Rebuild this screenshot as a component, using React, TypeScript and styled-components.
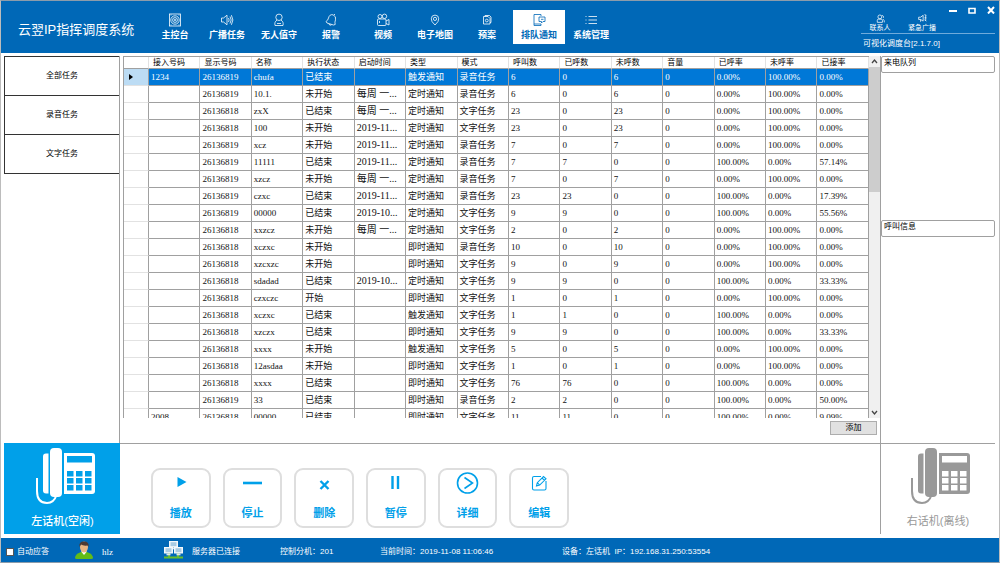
import React from 'react';
import styled, { createGlobalStyle, css } from 'styled-components';

const blue = '#0068b7';
const sky = '#00a0e9';
const line = '#a0a0a0';
const cjk = '"Noto Sans CJK SC", sans-serif';

const GlobalStyle = createGlobalStyle`
  *, *::before, *::after { box-sizing: border-box; }
  body { margin: 0; background: #fff; color: #000; font: 8px/12px "Liberation Sans", ${cjk}; }
  button, input { font: inherit; color: inherit; padding: 0; margin: 0; border: 0; background: none; }
  h1, h2, p { margin: 0; font-weight: 400; }
`;

const Window = styled.div`
  display: flex;
  flex-direction: column;
  height: 100vh;
  min-width: 800px;
  border: 1px solid #8c9cab;
  border-left-color: #bcbcbc;
  border-right-color: #bcbcbc;
`;

/* ---------- header ---------- */
const Header = styled.header`
  display: flex;
  align-items: stretch;
  flex: none;
  height: 52px;
  padding: 0 4px 0 17px;
  background: ${blue};
  color: #fff;
`;

const Title = styled.h1`
  width: 131px;
  padding-top: 19px;
  font-size: 13px;
  line-height: 20px;
  white-space: nowrap;
`;

const Nav = styled.nav`
  display: flex;
  flex: 1;
  padding: 9px 0;
`;

const NavButton = styled.button<{ $active?: boolean }>`
  display: flex;
  flex-direction: column;
  align-items: center;
  gap: 2px;
  width: 52px;
  padding-top: 3px;
  font-size: 9px;
  font-weight: 700;
  line-height: 12px;
  white-space: nowrap;
  ${p => p.$active && css`background: #fff; color: ${blue};`}
`;

const Tools = styled.div`
  display: flex;
  flex-direction: column;
  width: 134px;
`;

const ToolRow = styled.div`
  display: flex;
  justify-content: space-between;
  height: 35px;
  border-bottom: 1px solid #6fabdb;
`;

const QuickLinks = styled.div`
  display: flex;
  gap: 8px;
  padding: 13px 0 0 2px;
`;

const QuickButton = styled.button`
  display: flex;
  flex-direction: column;
  align-items: center;
  width: 34px;
  font-size: 7px;
  line-height: 10px;
  white-space: nowrap;
`;

const WindowControls = styled.div`
  display: flex;
  gap: 11px;
  align-items: flex-start;
  padding-top: 5px;
  button { display: flex; width: 8px; height: 8px; }
`;

const Version = styled.p`
  padding: 4px 2px;
  white-space: nowrap;
`;

/* ---------- body ---------- */
const Body = styled.main`
  display: grid;
  grid-template-columns: 116px minmax(0, 1fr) 115px;
  grid-template-rows: minmax(0, 1fr) 91px;
  flex: 1;
  min-height: 0;
  padding: 3px 4px 4px 3px;
`;

const TaskList = styled.div`
  border-right: 1px solid ${line};
`;

const TaskButton = styled.button`
  display: block;
  width: 100%;
  height: 39px;
  border: solid #333;
  border-width: 1px 0 0 1px;
  &:last-child { height: 40px; border-bottom-width: 1px; }
`;

const Center = styled.section`
  display: flex;
  flex-direction: column;
  min-width: 0;
  min-height: 0;
  padding-left: 3px;
`;

const GridArea = styled.div`
  display: flex;
  flex: 1;
  min-height: 0;
`;

const TableView = styled.div`
  flex: 1;
  min-width: 0;
  overflow: hidden;
`;

const Table = styled.table`
  width: 100%;
  table-layout: fixed;
  border-collapse: separate;
  border-spacing: 0;
  border: solid ${line};
  border-width: 1px 0 0 1px;
`;

const HeadCell = styled.th`
  height: 12px;
  padding: 0 0 0 4px;
  border-bottom: 1px solid ${line};
  border-right: 1px solid #e2e2e2;
  font-weight: 400;
  line-height: 11px;
  text-align: left;
  white-space: nowrap;
`;

const RowHead = styled.th<{ $selected?: boolean }>`
  height: 17px;
  padding: 0 0 0 5px;
  border-right: 1px solid ${line};
  border-bottom: 1px solid #e2e2e2;
  text-align: left;
  ${p => p.$selected && css`background: #bcdcf4;`}
  svg { display: block; }
`;

const Cell = styled.td<{ $large?: boolean; $selected?: boolean }>`
  height: 17px;
  padding: 0 0 0 2px;
  border: solid ${line};
  border-width: 0 1px 1px 0;
  overflow: hidden;
  white-space: nowrap;
  color: #111;
  font-family: "Liberation Serif", ${cjk};
  font-size: ${p => (p.$large ? 10 : 9)}px;
  line-height: 16px;
  ${p => p.$selected && css`background: #0078d7; color: #fff;`}
`;

const Scrollbar = styled.div`
  display: flex;
  flex-direction: column;
  width: 11px;
  background: #f0f0f0;
  svg { flex: none; display: block; }
`;

const Thumb = styled.div`
  height: 125px;
  margin-bottom: auto;
  background: #cdcdcd;
`;

const AddBar = styled.div`
  display: flex;
  justify-content: flex-end;
  height: 25px;
  padding: 3px 3px 8px;
`;

const AddButton = styled.button`
  width: 47px;
  border: 1px solid #adadad;
  background: #e1e1e1;
`;

const Side = styled.aside`
  display: flex;
  flex-direction: column;
  gap: 147px;
  border-left: 1px solid ${line};
`;

const Caption = styled.h2`
  height: 17px;
  padding: 0 2px;
  border: 1px solid ${line};
  border-radius: 2px;
  font-size: 8px;
`;

const PhoneButton = styled.button<{ $idle?: boolean }>`
  display: flex;
  flex-direction: column;
  align-items: center;
  gap: 7px;
  padding-top: 4px;
  font-size: 11px;
  line-height: 16px;
  color: #999;
  border: solid ${line};
  border-width: 1px 0 0 1px;
  ${p => p.$idle && css`background: ${sky}; color: #fff; border-color: ${sky}; font-weight: 500;`}
`;

const Actions = styled.div`
  border-top: 1px solid ${line};
  padding: 24px 0 0 31px;
`;

const ActionGrid = styled.div`
  display: grid;
  grid-template-columns: repeat(6, 1fr);
  gap: 12px;
  width: 418px;
`;

const ActionButton = styled.button`
  display: flex;
  flex-direction: column;
  align-items: center;
  gap: 8px;
  height: 60px;
  border: 2px solid #dedede;
  border-radius: 9px;
  color: ${sky};
  font-size: 11px;
  font-weight: 700;
  line-height: 16px;
  svg { flex: none; }
`;

/* ---------- footer ---------- */
const Footer = styled.footer`
  display: grid;
  grid-template-columns: 69px 89px 116px 100px 182px 1fr;
  align-items: center;
  flex: none;
  height: 24px;
  padding: 4px 0 0 5px;
  background: ${blue};
  color: #fff;
  white-space: nowrap;
`;

const AutoAnswer = styled.label`
  display: flex;
  align-items: center;
  gap: 3px;
  input { appearance: none; width: 8px; height: 8px; background: #fff; border: 1px solid #555; }
`;

const Status = styled.div<{ $serif?: boolean }>`
  display: flex;
  align-items: center;
  gap: 9px;
  height: 18px;
  ${p => p.$serif && css`font-family: "Liberation Serif", serif; font-size: 9px;`}
  svg { flex: none; margin-top: -5px; }
`;

/* ---------- drawings ---------- */
const Icon = ({ children, size = 14 }: { children: React.ReactNode; size?: number }) => (
  <svg width={size} height={size} viewBox="0 0 14 14" fill="none" stroke="currentColor" strokeWidth={size < 14 ? 1.2 : 0.8} aria-hidden="true">
    {children}
  </svg>
);

const nav: { label: string; icon: React.ReactNode; active?: boolean }[] = [
  { label: '主控台', icon: <><rect x="1.5" y="1" width="11" height="12" /><circle cx="7" cy="7" r="4.2" /><circle cx="7" cy="7" r="2.4" /><circle cx="7" cy="7" r=".7" /><path d="M2.5 2h1M10.500 2h1M2.500 12h1M10.500 12h1" /></> },
  { label: '广播任务', icon: <><path d="M1.500 5h2L7 2.200v9.600L3.500 9h-2z" /><path d="M8.500 5q1.300 2 0 4M10 3.500q2.400 3.500 0 7M11.400 2.200q3 4.800 0 9.600" /></> },
  { label: '无人值守', icon: <><circle cx="7" cy="4.300" r="3.200" /><path d="M5 7C3 8.500 2.500 10 3 12.500h8C11.500 10 11 8.500 9 7M5 10.500h4" /></> },
  { label: '报警', icon: <><path d="M3 10L2 8.500Q4 7.500 4.500 5 5.500 1 9 1.800q3.500 1.500 2.500 5-1 2.500-.3 4.700L9.500 12z" /><path d="M5 11q.5 2 2.500.8M10 2l1-1" /></> },
  { label: '视频', icon: <><circle cx="4" cy="3.500" r="2" /><circle cx="8.500" cy="3.300" r="2.200" /><rect x="1.500" y="6" width="8.500" height="6.500" rx="1" /><path d="M10 8l3-1.500v5.500L10 10.500M3.500 8v2" /></> },
  { label: '电子地图', icon: <><path d="M7 12Q3 8.500 3.300 5.800a3.700 3.700 0 0 1 7.400 0Q11 8.500 7 12z" /><circle cx="7" cy="5.900" r="1.600" /></> },
  { label: '预案', icon: <><path d="M3.500 3.500h4.500l2 2v5.500H3.500zM5 3.500V2.500h4.500l1.500 1.500v5.500H10" /><circle cx="6.800" cy="7.500" r="1.400" /></> },
  { label: '排队通知', active: true, icon: <><path d="M9 3V1.500H2v11h7V11M2 11h7" /><path d="M7 4h6v4.500h-2L9.500 10V8.500H7zM9 6.300h2.500" /></> },
  { label: '系统管理', icon: <path d="M4.500 3.500H13M4.500 7H13M4.500 10.500H13M1.500 3.500h1M1.500 7h1M1.500 10.500h1" /> },
];

const actions: { label: string; icon: React.ReactNode }[] = [
  { label: '播放', icon: <path d="M10.500 8l9 5-9 5z" fill="currentColor" /> },
  { label: '停止', icon: <path d="M4 14h19" stroke="currentColor" strokeWidth="2.600" /> },
  { label: '删除', icon: <path d="M9.500 12l8 8M17.500 12l-8 8" stroke="currentColor" strokeWidth="2.400" /> },
  { label: '暂停', icon: <path d="M10.500 7v13M16 7v13" stroke="currentColor" strokeWidth="2.400" /> },
  { label: '详细', icon: <><circle cx="13.500" cy="14" r="10" stroke="currentColor" strokeWidth="1.600" fill="none" /><path d="M10.500 8.500l8 5.500-8 5.500" stroke="currentColor" strokeWidth="1.600" fill="none" /></> },
  { label: '编辑', icon: <path d="M15 7.500H8q-1.500 0-1.500 1.500v10.500q0 1.500 1.500 1.500h10.500q1.500 0 1.500-1.500V12M10.500 17l.8-3.300L17.500 7.500l2.500 2.300-6.300 6.300zM16 9l2.500 2.300M11.300 13.700l2.400 2.400" stroke="currentColor" strokeWidth="1.100" fill="none" /> },
];

const Phone = ({ screen }: { screen: string }) => (
  <svg width="66" height="58" viewBox="-6 0 66 58" aria-hidden="true">
    <path d="M10 5.500q-3 0-3 3v34q0 3 3 3h2.500v-40z" fill="currentColor" />
    <rect x="14" y="0" width="12" height="49" rx="4" fill="currentColor" />
    <path d="M28 5h28q3 0 3 3v35q0 3-3 3H28z" fill="currentColor" />
    <path d="M1 30v13q0 12 10 12 7 0 9.500-8" stroke="currentColor" strokeWidth="2" fill="none" />
    <rect x="31" y="8" width="25" height="6.500" fill={screen} />
    {[0, 1, 2].map(r => [0, 1, 2].map(c => (
      <rect key={`${r}${c}`} x={31 + c * 9} y={23 + r * 7} width="6.500" height="5.500" fill={screen} />
    )))}
  </svg>
);

const UserIcon = () => (
  <svg width="18" height="18" viewBox="0 0 18 18" aria-hidden="true">
    <path d="M0 17q0-4 6-6h6q6 2 6 6 0 1-2 1H2q-2 0-2-1z" fill="#62bb18" />
    <path d="M6.500 11l2.500 3 2.500-3V9h-5z" fill="#fff" />
    <ellipse cx="9" cy="6" rx="4" ry="5.500" fill="#e9b583" />
    <path d="M4.500 6Q3.500.500 9 .500T13.500 6L12.500 4.500Q8 5 6 3.500z" fill="#4d3a34" />
  </svg>
);

const ServerIcon = () => (
  <svg width="19" height="18" viewBox="0 0 19 18" aria-hidden="true">
    <path d="M0 16.500h19M5 12v4.500M14 12v4.500" stroke="#6abf2a" strokeWidth="1.800" />
    {[[5, 0], [0, 6], [10, 6]].map(([x, y]) => (
      <g key={`${x}-${y}`}>
        <rect x={x} y={y} width="9" height="6.500" fill="#f4f8fb" />
        <rect x={x + 1.5} y={y + 1.2} width="6" height="4" fill="#a9cbe3" />
        <rect x={x + 2.5} y={y + 6.5} width="4" height="1.800" fill="#dbe6ee" />
      </g>
    ))}
  </svg>
);

/* ---------- data ---------- */
const columns = ['接入号码', '显示号码', '名称', '执行状态', '启动时间', '类型', '模式', '呼叫数', '已呼数', '未呼数', '音量', '已呼率', '未呼率', '已接率'];
const startTimeColumn = 4;

const N = '0.00%';
const F = '100.00%';
const W = '每周 一...';
const rows: string[][] = [
  ['1234', '26136819', 'chufa', '已结束', '', '触发通知', '录音任务', '6', '0', '6', '0', N, F, N],
  ['', '26136819', '10.1.', '未开始', W, '定时通知', '录音任务', '6', '0', '6', '0', N, F, N],
  ['', '26136818', 'zxX', '已结束', W, '定时通知', '文字任务', '23', '0', '23', '0', N, F, N],
  ['', '26136818', '100', '未开始', '2019-11...', '定时通知', '文字任务', '23', '0', '23', '0', N, F, N],
  ['', '26136819', 'xcz', '未开始', '2019-11...', '定时通知', '录音任务', '7', '0', '7', '0', N, F, N],
  ['', '26136819', '11111', '已结束', '2019-11...', '定时通知', '录音任务', '7', '7', '0', '0', F, N, '57.14%'],
  ['', '26136819', 'xzcz', '未开始', W, '定时通知', '录音任务', '7', '0', '7', '0', N, F, N],
  ['', '26136819', 'czxc', '已结束', '2019-11...', '定时通知', '录音任务', '23', '23', '0', '0', F, N, '17.39%'],
  ['', '26136819', '00000', '已结束', '2019-10...', '定时通知', '文字任务', '9', '9', '0', '0', F, N, '55.56%'],
  ['', '26136818', 'xxzcz', '未开始', W, '定时通知', '文字任务', '2', '0', '2', '0', N, F, N],
  ['', '26136818', 'xczxc', '未开始', '', '即时通知', '录音任务', '10', '0', '10', '0', N, F, N],
  ['', '26136818', 'xzcxzc', '未开始', '', '即时通知', '文字任务', '9', '0', '9', '0', N, F, N],
  ['', '26136818', 'sdadad', '已结束', '2019-10...', '定时通知', '文字任务', '9', '9', '0', '0', F, N, '33.33%'],
  ['', '26136818', 'czxczc', '开始', '', '即时通知', '文字任务', '1', '0', '1', '0', N, F, N],
  ['', '26136818', 'xczxc', '已结束', '', '触发通知', '文字任务', '1', '1', '0', '0', F, N, N],
  ['', '26136818', 'xzczx', '已结束', '', '即时通知', '文字任务', '9', '9', '0', '0', F, N, '33.33%'],
  ['', '26136818', 'xxxx', '未开始', '', '触发通知', '文字任务', '5', '0', '5', '0', N, F, N],
  ['', '26136818', '12asdaa', '未开始', '', '即时通知', '文字任务', '1', '0', '1', '0', N, F, N],
  ['', '26136818', 'xxxx', '已结束', '', '即时通知', '文字任务', '76', '76', '0', '0', F, N, N],
  ['', '26136819', '33', '已结束', '', '即时通知', '录音任务', '2', '2', '0', '0', F, N, '50.00%'],
  ['2008', '26136818', '00000', '已结束', '', '即时通知', '文字任务', '11', '11', '0', '0', F, N, '9.09%'],
];

export default function App() {
  return (
    <Window>
      <GlobalStyle />
      <Header>
        <Title>云翌IP指挥调度系统</Title>
        <Nav>
          {nav.map(n => (
            <NavButton key={n.label} $active={n.active}>
              <Icon>{n.icon}</Icon>
              {n.label}
            </NavButton>
          ))}
        </Nav>
        <Tools>
          <ToolRow>
            <QuickLinks>
              <QuickButton>
                <Icon size={9}><circle cx="6" cy="4.500" r="3" /><path d="M2 13V10q0-2 2-2h4q2 0 2 2v3zM9.500 2q3 1 2 4M11 8q2 1 2 5" /></Icon>
                联系人
              </QuickButton>
              <QuickButton>
                <Icon size={9}><path d="M1 5h3l4-3v9L4 8.500H1zM4 8.500V12M10 1l3 1M10 6h3M10 9l3 2M12 2v8" /></Icon>
                紧急广播
              </QuickButton>
            </QuickLinks>
            <WindowControls>
              <button aria-label="最小化"><svg width="8" height="8"><path d="M0 5h8" stroke="#fff" strokeWidth="2" /></svg></button>
              <button aria-label="最大化"><svg width="8" height="8"><path d="M1 2.500h6V7H1z" stroke="#fff" strokeWidth="1.600" fill="none" /></svg></button>
              <button aria-label="关闭"><svg width="8" height="8"><path d="M1 1l6 6.500M7 1L1 7.500" stroke="#fff" strokeWidth="2" /></svg></button>
            </WindowControls>
          </ToolRow>
          <Version>可视化调度台[2.1.7.0]</Version>
        </Tools>
      </Header>

      <Body>
        <TaskList>
          <TaskButton>全部任务</TaskButton>
          <TaskButton>录音任务</TaskButton>
          <TaskButton>文字任务</TaskButton>
        </TaskList>

        <Center>
          <GridArea>
            <TableView>
              <Table>
                <colgroup>
                  <col width="25" />
                  {columns.map(c => <col key={c} />)}
                </colgroup>
                <thead>
                  <tr>
                    <HeadCell />
                    {columns.map(c => <HeadCell key={c} scope="col">{c}</HeadCell>)}
                  </tr>
                </thead>
                <tbody>
                  {rows.map((row, r) => (
                    <tr key={r}>
                      <RowHead scope="row" $selected={r === 0}>
                        {r === 0 && <svg width="4" height="6"><path d="M0 0l4 3-4 3z" /></svg>}
                      </RowHead>
                      {row.map((value, c) => (
                        <Cell key={c} $selected={r === 0} $large={c === startTimeColumn}>{value}</Cell>
                      ))}
                    </tr>
                  ))}
                </tbody>
              </Table>
            </TableView>
            <Scrollbar>
              <svg width="11" height="11"><path d="M3 7l2.500-3L8 7" stroke="#444" strokeWidth="1.300" fill="none" /></svg>
              <Thumb />
              <svg width="11" height="11"><path d="M3 4l2.500 3L8 4" stroke="#444" strokeWidth="1.300" fill="none" /></svg>
            </Scrollbar>
          </GridArea>
          <AddBar><AddButton>添加</AddButton></AddBar>
        </Center>

        <Side>
          <Caption>来电队列</Caption>
          <Caption>呼叫信息</Caption>
        </Side>

        <PhoneButton $idle>
          <Phone screen={sky} />
          左话机(空闲)
        </PhoneButton>

        <Actions>
          <ActionGrid>
            {actions.map(a => (
              <ActionButton key={a.label}>
                <svg width="27" height="27" viewBox="0 1 27 27" aria-hidden="true">{a.icon}</svg>
                {a.label}
              </ActionButton>
            ))}
          </ActionGrid>
        </Actions>

        <PhoneButton>
          <Phone screen="#fff" />
          右话机(离线)
        </PhoneButton>
      </Body>

      <Footer>
        <AutoAnswer><input type="checkbox" />自动应答</AutoAnswer>
        <Status $serif><UserIcon />hlz</Status>
        <Status><ServerIcon />服务器已连接</Status>
        <Status>控制分机：201</Status>
        <Status>当前时间：2019-11-08 11:06:46</Status>
        <Status>设备：左话机&nbsp; IP：192.168.31.250:53554</Status>
      </Footer>
    </Window>
  );
}
